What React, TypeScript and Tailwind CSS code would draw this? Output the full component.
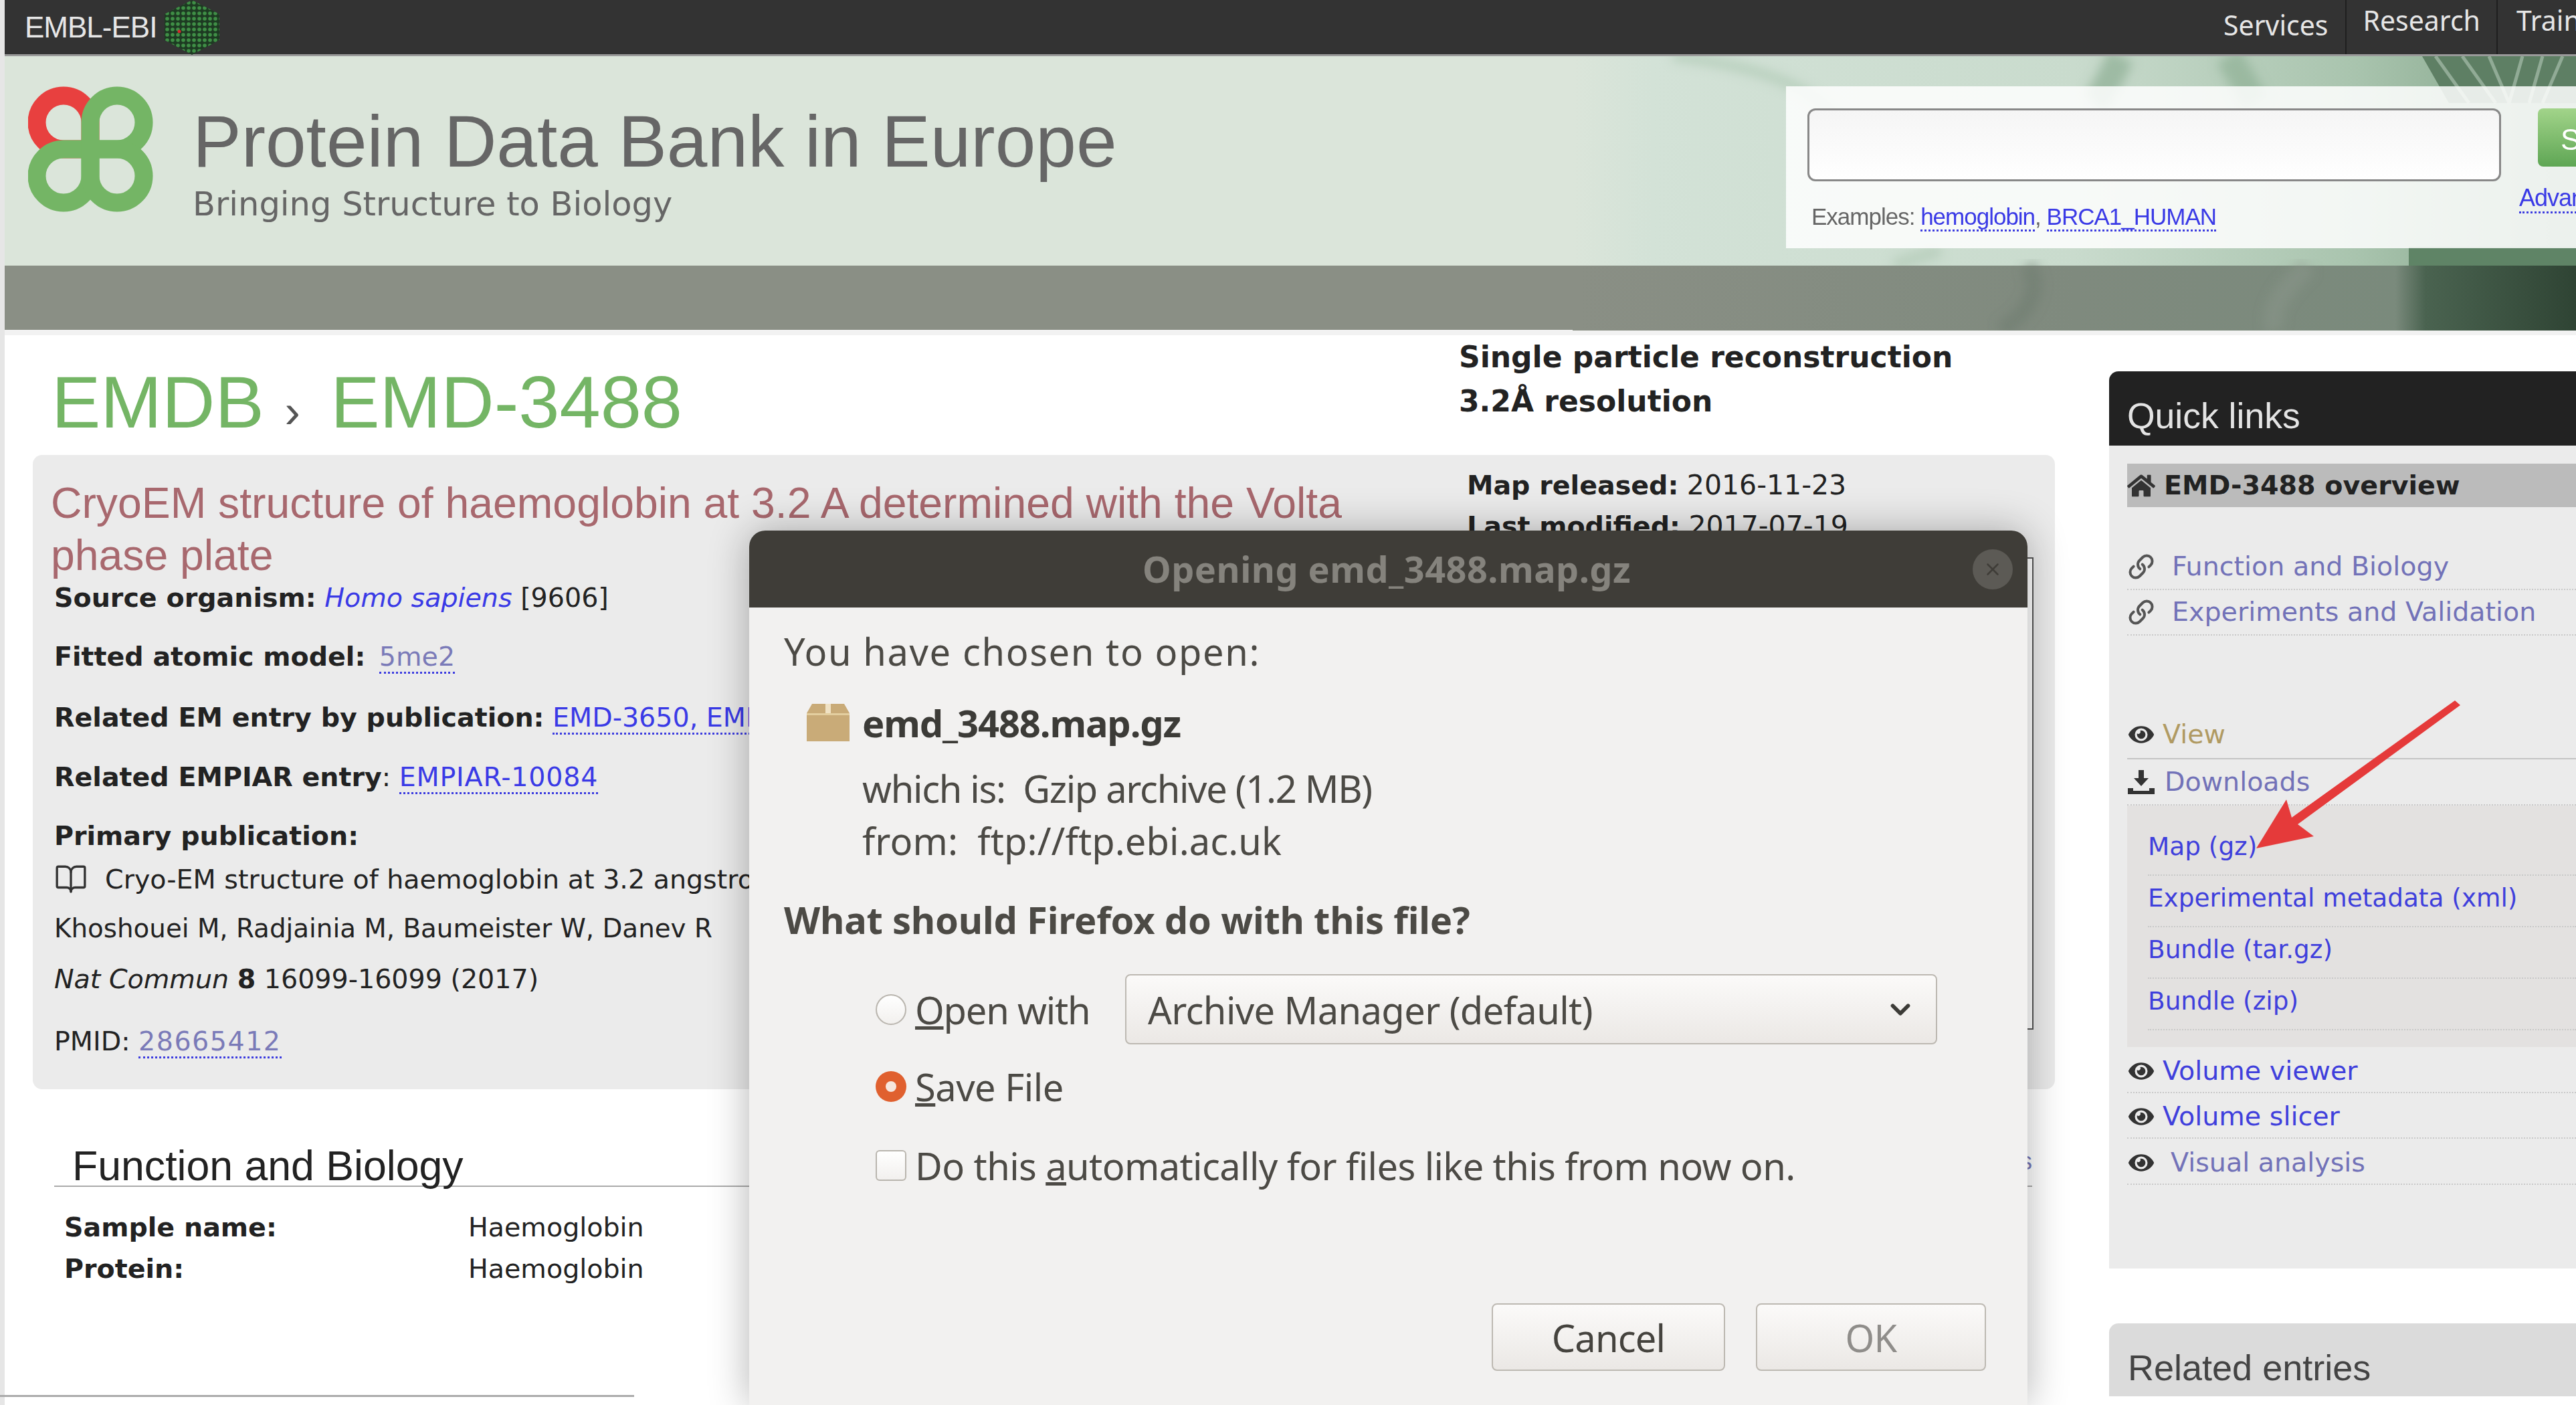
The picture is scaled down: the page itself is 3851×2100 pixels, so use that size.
import { BookOpen, ChevronDown, Link as LinkIcon, X } from "lucide-react"
import { FaEye, FaHome } from "react-icons/fa"

const dejavu = "font-['DejaVu_Sans',sans-serif]"
const liberation = "font-['Liberation_Sans',Arial,sans-serif]"
const ubuntu = "font-['Noto_Sans',sans-serif]"

const dotted = "border-b-[3px] border-dotted border-[#3b3be0]"

const EbiHex = () => (
    <svg width="82" height="82" viewBox="0 0 82 82" className="ml-[12px]">
        <defs>
            <pattern id="hexdots" width="8" height="8" patternUnits="userSpaceOnUse">
                <rect width="8" height="8" fill="#1d3a22" />
                <circle cx="4" cy="4" r="2.8" fill="#3f8f46" />
            </pattern>
        </defs>
        <polygon points="41,0 82,21 82,60 41,82 0,60 0,21" fill="url(#hexdots)" />
        <circle cx="22" cy="47" r="2.5" fill="#d8262c" />
    </svg>
)

const PdbeLogo = () => (
    <svg width="188" height="190" viewBox="0 0 188 190" fill="none" strokeWidth="27">
        <path d="M93 94V54A40 40 0 1 0 53 94Z" stroke="#e8403f" />
        <g stroke="#74b565">
            <path d="M93 94V54A40 40 0 1 1 133 94Z" />
            <path d="M93 94H53A40 40 0 1 0 93 134Z" />
            <path d="M93 94H133A40 40 0 1 1 93 134Z" />
        </g>
    </svg>
)

const HeaderSwirl = () => (
    <svg width="1500" height="410" viewBox="0 0 1500 410" className="absolute right-0 top-0" fill="none">
        <defs>
            <linearGradient id="fadeBase" x1="0" x2="1" y1="0" y2="0">
                <stop offset="0" stopColor="#dbe5da" />
                <stop offset="0.08" stopColor="#d3e2d7" />
                <stop offset="0.5" stopColor="#c9dbcd" />
                <stop offset="0.78" stopColor="#a9c4ae" />
                <stop offset="1" stopColor="#7ea084" />
            </linearGradient>
            <linearGradient id="fadeBand" x1="0" x2="1" y1="0" y2="0">
                <stop offset="0" stopColor="#8a8f85" />
                <stop offset="0.5" stopColor="#7f8a7e" />
                <stop offset="0.82" stopColor="#7a8a7c" />
                <stop offset="0.85" stopColor="#4a6350" />
                <stop offset="1" stopColor="#2f4434" />
            </linearGradient>
            <filter id="soft"><feGaussianBlur stdDeviation="8" /></filter>
        </defs>
        <rect width="1500" height="313" fill="url(#fadeBase)" />
        <g filter="url(#soft)">
            <path d="M150 0C330 20 400 70 430 150" stroke="#b2cbb6" strokeWidth="14" opacity="0.8" />
            <path d="M820 0C800 40 790 60 780 70" stroke="#93b39a" strokeWidth="40" opacity="0.8" />
            <path d="M980 0C1000 30 1010 50 1020 70" stroke="#8fb095" strokeWidth="40" opacity="0.7" />
            <path d="M550 290C520 300 500 305 480 313" stroke="#a9c4ad" strokeWidth="20" opacity="0.5" />
        </g>
        <path d="M1270 0L1310 70H1500V0Z" fill="#5e7f64" />
        <path d="M1290 0L1340 70M1330 0L1380 70M1370 0L1400 70M1420 0L1400 70M1450 0L1430 70M1480 0L1450 70" stroke="#bcd0bf" strokeWidth="5" opacity="0.55" />
        <path d="M1250 285H1500V313H1250Z" fill="#5f8466" />
        <rect y="313" width="1500" height="97" fill="url(#fadeBand)" />
        <g filter="url(#soft)">
            <path d="M680 313C700 340 690 380 640 410" stroke="#6c7a6d" strokeWidth="24" opacity="0.5" />
            <path d="M1100 313C1060 350 1040 380 1050 410" stroke="#8e9b8e" strokeWidth="30" opacity="0.4" />
        </g>
    </svg>
)

const SideRow = ({ icon, label, color, ml, h, border, pad }: { icon: React.ReactNode, label: string, color: string, ml: string, h: string, border: string, pad?: string }) => (
    <div className={`flex items-center ${h} ${border} ${pad}`}>
        <span className="flex w-[42px] justify-center">{icon}</span>
        <span className={`${ml} ${color}`}>{label}</span>
    </div>
)

const SubLink = ({ label }: { label: string }) => (
    <div className="ml-[31px] flex h-[77px] items-center border-b-2 border-dotted border-[#c9c9c9] pb-[8px] text-[37.4px] text-[#3f3fdc]">{label}</div>
)

const Sidebar = () => {
    const dash = "border-b-2 border-dotted border-[#c9c9c9]"
    const chain = <LinkIcon size={40} strokeWidth={2.4} className="text-[#555] -scale-x-100 rotate-90" />
    const eye = <FaEye size={38} className="text-[#333]" />
    return (
        <aside className={`ml-[81px] flex-1 ${dejavu} text-[39.6px]`}>
            <div className={`mt-[54px] flex h-[111px] items-center rounded-tl-[14px] bg-[#222] pl-[27px] pt-[23px] ${liberation} text-[53.5px] text-[#e4e4e4]`}>
                Quick links
            </div>
            <div className="h-[1230px] bg-[#ebebeb] pl-[27px] pt-[27px]">
                <div className="flex h-[65px] items-center bg-[#bbb] font-bold text-[#222]">
                    <FaHome size={42} className="text-[#333]" />
                    <span className="ml-[13px]">EMD-3488 overview</span>
                </div>
                <div className="mt-[55px]">
                    <SideRow icon={chain} label="Function and Biology" color="text-[#7272b8]" ml="ml-[25px]" h="h-[69px]" border={dash} />
                    <SideRow icon={chain} label="Experiments and Validation" color="text-[#7272b8]" ml="ml-[25px]" h="h-[68px]" border={dash} />
                </div>
                <div className="mt-[117px]">
                    <SideRow icon={eye} label="View" color="text-[#b09a62]" ml="ml-[11px]" h="h-[68px]" border="border-b-2 border-[#c4c4c4]" pad="pb-[4px]" />
                    <SideRow
                        icon={(
                            <svg width="40" height="36" viewBox="0 0 40 36" fill="#333">
                                <path d="M16 0H24V12H31L20 24L9 12H16Z" />
                                <path d="M0 27H8V31H32V27H40V36H0Z" />
                            </svg>
                        )}
                        label="Downloads"
                        color="text-[#7272b8]"
                        ml="ml-[14px]"
                        h="h-[69px]"
                        border={dash}
                    />
                    <div className="h-[361px] bg-[#e3e1e0] pt-[28px]">
                        <SubLink label="Map (gz)" />
                        <SubLink label="Experimental metadata (xml)" />
                        <SubLink label="Bundle (tar.gz)" />
                        <SubLink label="Bundle (zip)" />
                    </div>
                    <SideRow icon={eye} label="Volume viewer" color="text-[#3f3fdc]" ml="ml-[11px]" h="h-[69px]" border={dash} pad="pt-[4px]" />
                    <SideRow icon={eye} label="Volume slicer" color="text-[#3f3fdc]" ml="ml-[11px]" h="h-[68px]" border={dash} pad="pt-[4px]" />
                    <SideRow icon={eye} label="Visual analysis" color="text-[#7272b8]" ml="ml-[23px]" h="h-[69px]" border={dash} pad="pt-[4px]" />
                </div>
            </div>
            <div className={`mt-[82px] flex h-[109px] items-center rounded-tl-[14px] bg-[#dbdbdb] pl-[28px] pt-[23px] ${liberation} text-[54px] text-[#444]`}>
                Related entries
            </div>
        </aside>
    )
}

const EntryPanel = () => (
    <section className="flex h-[948px] rounded-[14px] bg-[#ebebeb] text-[39.6px] text-[#222]">
        <div className="w-[2110px] shrink-0 pl-[27px] pt-[33px]">
            <h2 className={`${liberation} w-[1990px] text-[64.3px] leading-[78px] text-[#a8686e]`}>
                CryoEM structure of haemoglobin at 3.2 A determined with the Volta phase plate
            </h2>
            <div className="ml-[5px] mt-[1px] whitespace-nowrap leading-[46px]">
                <p><b>Source organism:</b> <i className="text-[#3a3ae6]">Homo sapiens</i> [9606]</p>
                <p className="mt-[42px]"><b>Fitted atomic model:</b> <span className={`ml-[8px] text-[#7a7ab8] ${dotted}`}>5me2</span></p>
                <p className="mt-[45px]"><b>Related EM entry by publication:</b> <span className={`text-[#3a3ae6] ${dotted}`}>EMD-3650, EMD-3651</span></p>
                <p className="mt-[43px]"><b>Related EMPIAR entry</b>: <span className={`tracking-[0.8px] text-[#3a3ae6] ${dotted}`}>EMPIAR-10084</span></p>
                <p className="mt-[42px] font-bold">Primary publication:</p>
                <p className="mt-[17px] flex items-center"><BookOpen size={50} strokeWidth={1.6} className="mr-[26px] text-[#333]" />Cryo-EM structure of haemoglobin at 3.2 angstrom resolution</p>
                <p className="mt-[26px] text-[38.8px]">Khoshouei M, Radjainia M, Baumeister W, Danev R</p>
                <p className="mt-[29px]"><i>Nat Commun</i> <b>8</b> 16099-16099 (2017)</p>
                <p className="mt-[47px]">PMID: <span className={`tracking-[1.5px] text-[#7a7ab8] ${dotted}`}>28665412</span></p>
            </div>
        </div>
        <div className="flex-1 pl-[34px] pr-[32px] pt-[22px] leading-[46px]">
            <p><b>Map released:</b> <span className="text-[41px]">2016-11-23</span></p>
            <p className="mt-[15px]"><b>Last modified:</b> <span className="text-[41px]">2017-07-19</span></p>
            <div className="mt-[24px] h-[706px] border-2 border-[#555] bg-white" />
        </div>
    </section>
)

const Radio = ({ checked }: { checked?: boolean }) => (
    checked
        ? <span className="flex h-[46px] w-[46px] items-center justify-center rounded-full bg-[#e0602f]"><span className="h-[16px] w-[16px] rounded-full bg-[#f6e6de]" /></span>
        : <span className="h-[46px] w-[46px] rounded-full border-2 border-[#b9b5ae] bg-gradient-to-b from-white to-[#f2f0ee]" />
)

const DialogButton = ({ label, width, muted }: { label: string, width: string, muted?: boolean }) => (
    <button className={`h-[101px] ${width} rounded-[8px] border-2 border-[#bdb9b2] bg-gradient-to-b from-[#fbfaf9] to-[#ebe8e5] text-[56px] tracking-[-0.8px] ${muted ? "text-[#8f8d8a]" : "text-[#45433e]"}`}>
        {label}
    </button>
)

const DownloadDialog = () => (
    <div className={`absolute left-[1120px] top-[793px] flex h-[1307px] w-[1911px] flex-col rounded-t-[24px] bg-[#f2f1f0] ${ubuntu} text-[56px] text-[#4c4a45] shadow-[0_0_60px_rgba(0,0,0,0.3)]`}>
        <div className="flex h-[115px] shrink-0 items-center rounded-t-[24px] bg-[#3f3d38] pl-[588px] pr-[22px]">
            <span className="flex-1 text-[54px] font-bold tracking-[0.5px] text-[#85837d]">Opening emd_3488.map.gz</span>
            <span className="flex h-[60px] w-[60px] items-center justify-center rounded-full bg-[#5c5a55]">
                <X size={30} strokeWidth={2} className="text-[#3f3d38]" />
            </span>
        </div>
        <div className="flex flex-1 flex-col pl-[52px] pr-[62px]">
            <p className="mt-[27px] leading-[76px] tracking-[1.6px]">You have chosen to open:</p>
            <div className="mt-[31px] flex h-[76px] items-center">
                <svg width="64" height="56" viewBox="0 0 64 56" className="ml-[34px] mr-[19px]">
                    <path d="M8 0H56L64 14V56H0V14Z" fill="#c9ab78" />
                    <path d="M0 14H64V17H0Z" fill="#e3ce9f" />
                    <path d="M28 0H36V14H28Z" fill="#f0e2c4" />
                </svg>
                <b className="tracking-[-1.1px] text-[#3c3b37]">emd_3488.map.gz</b>
            </div>
            <div className="ml-[117px] mt-[21px] leading-[78px]">
                <p className="tracking-[-1.3px]">which is:&nbsp; Gzip archive (1.2 MB)</p>
                <p className="tracking-[0.1px]">from:&nbsp; ftp://ftp.ebi.ac.uk</p>
            </div>
            <p className="mt-[41px] font-bold leading-[76px] tracking-[-0.2px]">What should Firefox do with this file?</p>
            <div className="ml-[137px] mt-[44px] flex h-[105px] items-center">
                <Radio />
                <span className="ml-[13px] w-[314px] tracking-[-1.2px]"><u>O</u>pen with</span>
                <div className="flex h-[105px] w-[1214px] items-center justify-between rounded-[8px] border-2 border-[#bdb9b2] bg-gradient-to-b from-[#fbfaf9] to-[#ebe8e5] pl-[32px] pr-[30px] tracking-[-0.6px]">
                    Archive Manager (default)
                    <ChevronDown size={46} strokeWidth={3} className="text-[#3c3b37]" />
                </div>
            </div>
            <div className="ml-[137px] mt-[16px] flex h-[94px] items-center">
                <Radio checked />
                <span className="ml-[13px] tracking-[-0.5px]"><u>S</u>ave File</span>
            </div>
            <div className="ml-[137px] mt-[24px] flex h-[94px] items-center">
                <span className="h-[46px] w-[46px] rounded-[6px] border-2 border-[#b9b5ae] bg-gradient-to-b from-white to-[#f2f0ee]" />
                <span className="ml-[13px] tracking-[-0.6px]">Do this <u>a</u>utomatically for files like this from now on.</span>
            </div>
            <div className="mt-[159px] flex justify-end gap-[46px]">
                <DialogButton label="Cancel" width="w-[349px]" />
                <DialogButton label="OK" width="w-[344px]" muted />
            </div>
        </div>
    </div>
)

const App = () => {
    return (
        <div className={`relative h-[2100px] w-[3851px] overflow-hidden bg-white pl-[7px] ${dejavu}`}>
            <span className="absolute left-0 top-0 h-full w-[7px] bg-[#e6e6e6]" />
            <header className="flex h-[84px] items-center border-b-[3px] border-[#9a9a9a] bg-[#333] pl-[30px] text-[#e6e6e6]">
                <span className={`${liberation} text-[44px] tracking-[-1px]`}>EMBL-EBI</span>
                <EbiHex />
                <nav className={`ml-auto flex h-full w-[527px] items-stretch overflow-hidden ${ubuntu} text-[41px]`}>
                    <span className="flex items-center border-r-2 border-[#1f1f1f] pb-[6px] pr-[26px]">Services</span>
                    <span className="flex items-start border-r-2 border-[#1f1f1f] px-[24px]">Research</span>
                    <span className="flex items-start whitespace-nowrap pl-[28px]">Training</span>
                </nav>
            </header>
            <div className="relative bg-[#dbe5da]">
                <HeaderSwirl />
                <div className="relative flex h-[313px] items-start pl-[35px] pt-[45px]">
                    <PdbeLogo />
                    <div className="ml-[58px] pt-[18px] text-[#666]">
                        <h1 className={`${liberation} whitespace-nowrap text-[109px] leading-[128px]`}>Protein Data Bank in Europe</h1>
                        <p className="text-[49.5px] leading-[60px]">Bringing Structure to Biology</p>
                    </div>
                    <div className="ml-auto flex h-[242px] w-[1181px] shrink-0 bg-white/85 pl-[32px] pt-[33px]">
                        <div className="w-[1037px] shrink-0">
                            <div className="h-[109px] rounded-[12px] border-[3px] border-[#888] bg-gradient-to-b from-[#f5f5f5] to-white" />
                            <p className={`${liberation} mt-[27px] text-[35px] tracking-[-1px] text-[#666]`}>
                                <span className="ml-[6px]">Examples: </span>
                                <span className={`text-[#3a3ae6] ${dotted}`}>hemoglobin</span>, <span className={`text-[#3a3ae6] ${dotted}`}>BRCA1_HUMAN</span>
                            </p>
                        </div>
                        <div className={`${liberation} flex-1 overflow-hidden`}>
                            <div className="ml-[55px] h-[87px] rounded-l-[8px] bg-gradient-to-b from-[#a2d48a] to-[#5ea654] pl-[34px] pt-[14px] text-[44px] text-white">Search</div>
                            <p className="ml-[27px] mt-[20px] whitespace-nowrap text-[36px] tracking-[-1px] text-[#3a3ae6]"><span className={dotted}>Advanced</span></p>
                        </div>
                    </div>
                </div>
                <div className="relative h-[96px] w-[2360px] bg-[#8a8f85]" />
            </div>
            <div className="h-[8px] bg-[#f2f2f2]" />
            <main className="flex">
                <div className="w-[3065px] shrink-0">
                    <div className="flex h-[179px] pl-[70px]">
                        <div className={`w-[2104px] shrink-0 ${liberation} pt-[32px] text-[110px] leading-[136px] text-[#74b565]`}>
                            EMDB <span className="mr-[15px] text-[70px] text-[#555]">›</span> EMD-3488
                        </div>
                        <div className="text-[44px] font-bold leading-[66px] text-[#222]">
                            <p>Single particle reconstruction</p>
                            <p>3.2Å resolution</p>
                        </div>
                    </div>
                    <div className="pl-[42px]"><EntryPanel /></div>
                    <section className="ml-[74px] mr-[34px] mt-[86px]">
                        <div className={`flex h-[60px] items-end justify-between border-b-2 border-[#aaa] pl-[27px] ${liberation} text-[62.6px] leading-[60px] text-[#222]`}>
                            <span>Function and Biology</span>
                            <span className="pb-[6px] text-[36px] text-[#7a7ab8]">s</span>
                        </div>
                        <dl className="ml-[15px] mt-[29px] grid grid-cols-[604px_1fr] text-[39.6px] leading-[62px] text-[#222]">
                            <dt className="font-bold">Sample name:</dt>
                            <dd>Haemoglobin</dd>
                            <dt className="font-bold">Protein:</dt>
                            <dd>Haemoglobin</dd>
                        </dl>
                    </section>
                </div>
                <Sidebar />
            </main>
            <span className="absolute bottom-[12px] left-0 h-[3px] w-[948px] bg-[#aaa]" />
            <DownloadDialog />
            <svg width="320" height="240" viewBox="0 0 320 240" className="absolute left-[3365px] top-[1040px]">
                <path d="M305 7L61 182L53 155L8 228L94 210L70 192L313 14Z" fill="#e53a3a" />
            </svg>
        </div>
    )
}

export default App
